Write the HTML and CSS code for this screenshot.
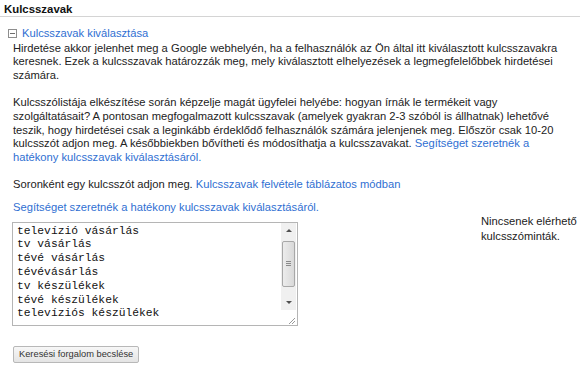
FILE: index.html
```html
<!DOCTYPE html>
<html lang="hu">
<head>
    <meta charset="UTF-8">
    <title>Kulcsszavak</title>
    <link rel="stylesheet" href="styles.css">
</head>
<body>

    <div class="keywords-section">
        <h3 class="section-title">Kulcsszavak</h3>

        <!-- Collapsible block -->
        <div class="toggle-row">
            <span class="toggle-icon"></span>
            <a href="#" class="link">Kulcsszavak kiválasztása</a>
        </div>

        <div class="section-body">
            <p>Hirdetése akkor jelenhet meg a Google webhelyén, ha a felhasználók az Ön által itt kiválasztott kulcsszavakra keresnek. Ezek a kulcsszavak határozzák meg, mely kiválasztott elhelyezések a legmegfelelőbbek hirdetései számára.</p>

            <p>Kulcsszólistája elkészítése során képzelje magát ügyfelei helyébe: hogyan írnák le termékeit vagy szolgáltatásait? A pontosan megfogalmazott kulcsszavak (amelyek gyakran 2-3 szóból is állhatnak) lehetővé teszik, hogy hirdetései csak a leginkább érdeklődő felhasználók számára jelenjenek meg. Először csak 10-20 kulcsszót adjon meg. A későbbiekben bővítheti és módosíthatja a kulcsszavakat. <a href="#" class="link">Segítséget szeretnék a hatékony kulcsszavak kiválasztásáról.</a></p>

            <p class="line-hint">Soronként egy kulcsszót adjon meg. <a href="#" class="link">Kulcsszavak felvétele táblázatos módban</a></p>

            <div class="keyword-row">
                <div class="keyword-input">
                    <a href="#" class="link help-link">Segítséget szeretnék a hatékony kulcsszavak kiválasztásáról.</a>
                    <div class="list-box">
                        <textarea class="keyword-list" spellcheck="false">televízió vásárlás
tv vásárlás
tévé vásárlás
tévévásárlás
tv készülékek
tévé készülékek
televíziós készülékek</textarea>
                        <!-- scrollbar drawn by hand, the browser hides its own -->
                        <div class="scrollbar">
                            <span class="sb-btn sb-up"></span>
                            <span class="sb-track"><span class="sb-thumb"></span></span>
                            <span class="sb-btn sb-down"></span>
                            <span class="sb-corner">
                                <svg width="9" height="9" viewBox="0 0 9 9">
                                    <path d="M8 2 L2 8 M8 5 L5 8" stroke="#9a9a9a" stroke-width="1" fill="none"/>
                                </svg>
                            </span>
                        </div>
                    </div>
                </div>
                <div class="samples">Nincsenek elérhető<br>kulcsszóminták.</div>
            </div>

            <button class="estimate-btn">Keresési forgalom becslése</button>
        </div>
    </div>

</body>
</html>
```

FILE: styles.css
```css
body {
    margin: 0;
    padding: 0;
    font-family: "Liberation Sans", Arial, sans-serif;
    font-size: 11.2px;
    line-height: 13.6px;
    color: #222;
    background: #fff;
}

.keywords-section {
    width: 580px;
}

.section-title {
    margin: 0;
    padding: 3px 4px 0;
    font-size: 11.4px;
    font-weight: bold;
    line-height: 13px;
    color: #111;
    border-bottom: 1px solid #d4d4d4;
}

.link {
    color: #2f6fd2;
    text-decoration: none;
}

.toggle-row {
    display: flex;
    align-items: center;
    gap: 5px;
    margin: 10px 0 0 8px;
}

.toggle-icon {
    position: relative;
    width: 7px;
    height: 7px;
    border: 1px solid #8e8e8e;
    background: #fff;
}

.toggle-icon::after {
    content: "";
    position: absolute;
    left: 1px;
    top: 3px;
    width: 5px;
    height: 1px;
    background: #6e6e6e;
}

.section-body {
    padding: 1px 14px 0 13px;
}

.section-body p {
    margin: 0 0 14px;
}

.section-body .line-hint {
    margin-bottom: 9px;
}

.keyword-row {
    display: grid;
    grid-template-columns: 286px auto;
    column-gap: 182px;
    align-items: start;
}

.keyword-input {
    display: flex;
    flex-direction: column;
    align-items: flex-start;
    gap: 7px;
}

.help-link {
    white-space: nowrap;
}

.list-box {
    box-sizing: border-box;
    display: flex;
    width: 286px;
    height: 104px;
    margin-left: -1px;
    border: 1px solid #b5b5b5;
    background: #fff;
}

.keyword-list {
    flex: 1;
    min-width: 0;
    margin: 0;
    padding: 2px 4px;
    border: none;
    font-family: "Liberation Mono", "Courier New", monospace;
    font-size: 11.3px;
    line-height: 13.8px;
    color: #111;
    background: transparent;
    resize: none;
    outline: none;
    overflow: hidden;
}

.scrollbar {
    display: flex;
    flex-direction: column;
    width: 15px;
    margin-right: 1px;
    background: #f0f0f0;
}

.sb-btn {
    display: flex;
    align-items: center;
    justify-content: center;
    height: 15px;
}

.sb-up::before,
.sb-down::before {
    content: "";
    width: 0;
    height: 0;
    border-left: 3px solid transparent;
    border-right: 3px solid transparent;
}

.sb-up::before {
    border-bottom: 3px solid #505050;
}

.sb-down::before {
    border-top: 3px solid #505050;
}

.sb-track {
    flex: 1;
    padding: 3px 1px 7px;
}

.sb-thumb {
    box-sizing: border-box;
    display: flex;
    align-items: center;
    justify-content: center;
    height: 46px;
    background: linear-gradient(to right, #ececec, #d9d9d9);
    border: 1px solid #a8a8a8;
    border-radius: 2px;
}

.sb-thumb::after {
    content: "";
    width: 5px;
    height: 1px;
    background: #8a8a8a;
    box-shadow: 0 -2px 0 #8a8a8a, 0 2px 0 #8a8a8a;
}

.sb-corner {
    display: flex;
    align-items: flex-end;
    justify-content: flex-end;
    height: 15px;
    background: #fff;
}

.samples {
    margin-top: 13px;
    line-height: 15px;
    white-space: nowrap;
}

.estimate-btn {
    margin-top: 20px;
    padding: 2px 5px 2px;
    font-family: "Liberation Sans", Arial, sans-serif;
    font-size: 9.3px;
    line-height: 11px;
    color: #333;
    background: linear-gradient(#f7f7f7, #e4e4e4);
    border: 1px solid #b8b8b8;
    border-radius: 2px;
    cursor: pointer;
}
```
